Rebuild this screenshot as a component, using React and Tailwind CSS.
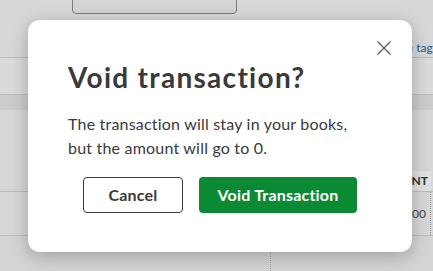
import { X } from "lucide-react";

function Backdrop() {
    return (
        <div className="flex flex-col h-full">
            <div className="h-[58px] bg-[#d7d8d9] border-b border-[#b9babb] relative">
                <div className="ml-[72px] w-[165px] h-[15px] -mt-px bg-[#d3d4d5] border border-[#7a7b7c] rounded-b-[4px]" />
                <div className="pl-[371px] pt-[25px] whitespace-nowrap text-[12px] text-[#1d5d95]">Manage tags</div>
            </div>
            <div className="h-[37px] bg-[#d9dada] border-b border-[#b9babb]" />
            <div className="h-[15px] bg-[#cbcccd]" />
            <div className="h-[61px] bg-[#d6d7d8]" />
            <div className="h-[21px] bg-[#d6d7d8] border-b border-[#b9babb] flex justify-end">
                <div className="w-[24px] mr-[2px] bg-[#e0e1e1] text-[12px] font-bold text-[#333] text-right pr-[3px] leading-[20px]">NT</div>
            </div>
            <div className="h-[44px] bg-[#d6d7d8] border-b border-[#b9babb] flex justify-end">
                <div className="w-[24px] mr-[2px] border-r border-dotted border-[#9a9a9a] text-[12px] text-[#444] text-right pr-[4px] pt-[13px]">00</div>
            </div>
            <div className="flex-1 bg-[#d3d4d5] flex">
                <div className="ml-[270px] border-l border-dotted border-[#a5a5a5]" />
            </div>
        </div>
    );
}

export default function App() {
    return (
        <div className="relative w-[433px] h-[271px] overflow-hidden" style={{ fontFamily: "Lato, 'Noto Sans', sans-serif" }}>
            <Backdrop />
            <div className="absolute left-[28px] top-[20px] w-[384px] h-[232px] bg-white rounded-[12px] shadow-[0_4px_18px_rgba(0,0,0,0.25)] px-[40px] pt-[40px]">
                <button className="absolute right-[16px] top-[16px] text-[#5d5e61]">
                    <X size={24} strokeWidth={1.4} />
                </button>
                <h2 className="text-[28px] leading-[34px] font-bold text-[#393a3d] tracking-[1.3px]">Void transaction?</h2>
                <p className="mt-[18px] text-[16px] leading-[24px] text-[#393a3d] tracking-[0.2px]">
                    The transaction will stay in your books,<br />
                    but the amount will go to 0.
                </p>
                <div className="mt-[17px] flex justify-center gap-[16px] -ml-[40px] -mr-[40px]">
                    <button className="w-[100px] h-[36px] border border-[#393a3d] rounded-[4px] text-[16px] font-bold text-[#393a3d] tracking-[0.2px]">Cancel</button>
                    <button className="w-[158px] h-[36px] bg-[#0b8a34] rounded-[4px] text-[16px] font-bold text-white tracking-[0.2px]">Void Transaction</button>
                </div>
            </div>
        </div>
    );
}
